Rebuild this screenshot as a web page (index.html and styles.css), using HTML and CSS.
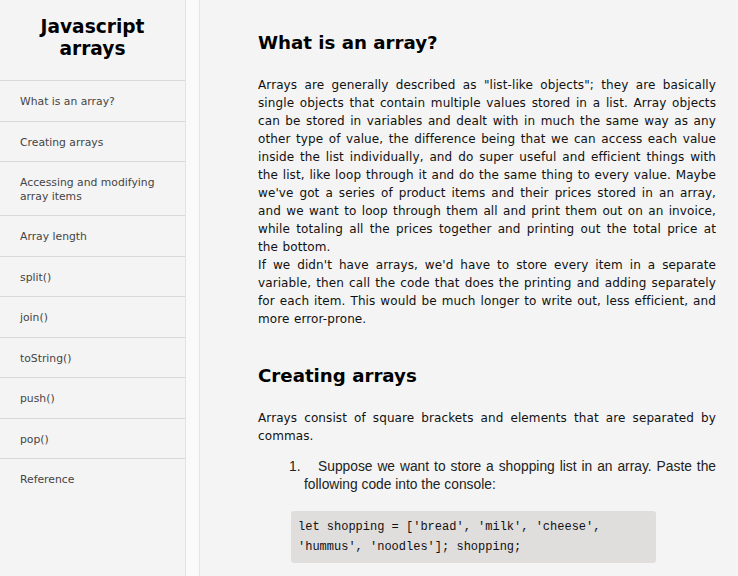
FILE: index.html
```html
<!DOCTYPE html>
<html>
<head>
<meta charset="utf-8">
<title>Javascript arrays</title>
<link rel="stylesheet" href="styles.css">
</head>
<body>
<div class="layout">
  <aside class="sidebar">
    <h1 class="title">Javascript<br>arrays</h1>
    <nav class="nav">
      <a class="nav-item" href="#what">What is an array?</a>
      <a class="nav-item" href="#creating">Creating arrays</a>
      <a class="nav-item" href="#access">Accessing and modifying array items</a>
      <a class="nav-item" href="#length">Array length</a>
      <a class="nav-item" href="#split">split()</a>
      <a class="nav-item" href="#join">join()</a>
      <a class="nav-item" href="#tostring">toString()</a>
      <a class="nav-item" href="#push">push()</a>
      <a class="nav-item" href="#pop">pop()</a>
      <a class="nav-item" href="#ref">Reference</a>
    </nav>
  </aside>
  <div class="track"></div>
  <main class="main">
    <section class="section" id="what">
      <h2 class="heading">What is an array?</h2>
      <p class="text">Arrays are generally described as "list-like objects"; they are basically single objects that contain multiple values stored in a list. Array objects can be stored in variables and dealt with in much the same way as any other type of value, the difference being that we can access each value inside the list individually, and do super useful and efficient things with the list, like loop through it and do the same thing to every value. Maybe we've got a series of product items and their prices stored in an array, and we want to loop through them all and print them out on an invoice, while totaling all the prices together and printing out the total price at the bottom.<br>If we didn't have arrays, we'd have to store every item in a separate variable, then call the code that does the printing and adding separately for each item. This would be much longer to write out, less efficient, and more error-prone.</p>
    </section>
    <section class="section second" id="creating">
      <h2 class="heading">Creating arrays</h2>
      <p class="text">Arrays consist of square brackets and elements that are separated by commas.</p>
      <ol class="steps">
        <li class="step"><span class="num">1.</span>Suppose we want to store a shopping list in an array. Paste the following code into the console:</li>
      </ol>
      <pre class="code"><code>let shopping = ['bread', 'milk', 'cheese', 'hummus', 'noodles']; shopping;</code></pre>
    </section>
  </main>
</div>
</body>
</html>
```
FILE: styles.css
```css
* { box-sizing: border-box; }
html, body { margin: 0; padding: 0; }
body {
  background: #f4f4f4;
  font-family: "DejaVu Sans", Verdana, sans-serif;
  color: #111;
  height: 576px;
  overflow: hidden;
}
.layout {
  display: flex;
  height: 576px;
}
.sidebar {
  width: 186px;
  flex: none;
  background: #f4f4f4;
  border-right: 1px solid #e2e2e2;
}
.title {
  margin: 0;
  padding: 16px 0 20px;
  text-align: center;
  font-size: 18.6px;
  line-height: 22px;
  font-weight: bold;
  color: #000;
}
.nav {
  display: flex;
  flex-direction: column;
}
.nav-item {
  display: block;
  padding: 14px 20px 12px;
  border-top: 1px solid #d9d9d9;
  font-size: 10.8px;
  line-height: 13.5px;
  color: #444;
  text-decoration: none;
}
.track {
  width: 14px;
  flex: none;
  background: #fafafa;
  border-right: 1px solid #e4e4e4;
}
.main {
  flex: 1;
  padding: 32px 22px 0 58px;
  min-width: 0;
}
.section { margin: 0; }
.section.second { margin-top: 37px; }
.heading {
  margin: 0;
  font-size: 18.2px;
  line-height: 22px;
  font-weight: bold;
  color: #000;
}
.text {
  margin: 22px 0 0;
  font-size: 12px;
  line-height: 18px;
  letter-spacing: 0.1px;
  word-spacing: 0.6px;
  text-align: justify;
  color: #111;
}
.steps {
  list-style: none;
  margin: 13px 0 0;
  padding: 0 0 0 30px;
}
.step {
  font-family: "Liberation Sans", Arial, sans-serif;
  font-size: 13.8px;
  line-height: 18px;
  color: #222;
  padding-left: 16px;
  text-indent: -15px;
  text-align: justify;
}
.num {
  display: inline-block;
  width: 29px;
  text-indent: 0;
}
.code {
  margin: 17px 0 0 33px;
  width: 365px;
  padding: 6px 7px;
  background: #e0dddd;
  border-radius: 3px;
  font-family: "Liberation Mono", "Courier New", monospace;
  font-size: 12px;
  line-height: 20px;
  color: #111;
  white-space: pre-wrap;
}
.code code { font-family: inherit; }
```
